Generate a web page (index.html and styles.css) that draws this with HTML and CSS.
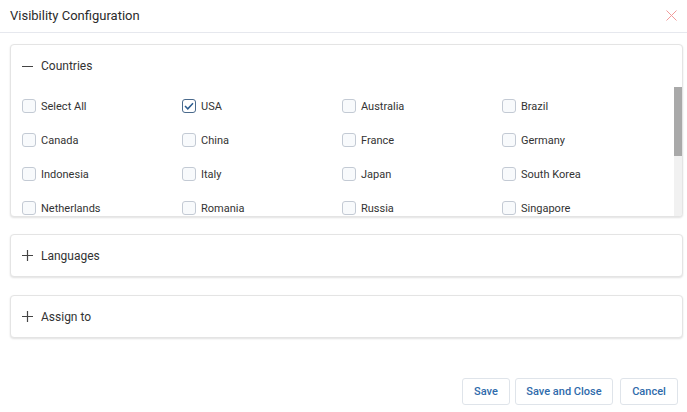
FILE: index.html
```html
<!DOCTYPE html>
<html>
<head>
<meta charset="utf-8">
<link rel="stylesheet" href="styles.css">
</head>
<body>
<div class="dialog">
  <div class="dlg-head">
    <span class="dlg-title">Visibility Configuration</span>
    <svg class="close" width="11" height="11" viewBox="0 0 11 11"><path d="M0.5 0.5L10.5 10.5M10.5 0.5L0.5 10.5" stroke="#f19a9a" stroke-width="1"/></svg>
  </div>
  <div class="dlg-body">
    <div class="panel panel-open">
      <div class="panel-head">
        <svg class="toggle" width="11" height="11" viewBox="0 0 11 11"><path d="M0 5.5H11" stroke="#444" stroke-width="1.2"/></svg>
        <span>Countries</span>
      </div>
      <div class="scroll-wrap">
        <div class="scroll">
          <div class="grid">
            <label class="item"><span class="cb"></span>Select All</label>
            <label class="item"><span class="cb checked"><svg width="10" height="8" viewBox="0 0 10 8"><path d="M1 4L3.8 6.8L9 1.2" fill="none" stroke="#2d5d8f" stroke-width="1.5"/></svg></span>USA</label>
            <label class="item"><span class="cb"></span>Australia</label>
            <label class="item"><span class="cb"></span>Brazil</label>
            <label class="item"><span class="cb"></span>Canada</label>
            <label class="item"><span class="cb"></span>China</label>
            <label class="item"><span class="cb"></span>France</label>
            <label class="item"><span class="cb"></span>Germany</label>
            <label class="item"><span class="cb"></span>Indonesia</label>
            <label class="item"><span class="cb"></span>Italy</label>
            <label class="item"><span class="cb"></span>Japan</label>
            <label class="item"><span class="cb"></span>South Korea</label>
            <label class="item"><span class="cb"></span>Netherlands</label>
            <label class="item"><span class="cb"></span>Romania</label>
            <label class="item"><span class="cb"></span>Russia</label>
            <label class="item"><span class="cb"></span>Singapore</label>
            <label class="item"><span class="cb"></span>Spain</label>
            <label class="item"><span class="cb"></span>Sweden</label>
            <label class="item"><span class="cb"></span>Switzerland</label>
            <label class="item"><span class="cb"></span>Taiwan</label>
            <label class="item"><span class="cb"></span>Thailand</label>
            <label class="item"><span class="cb"></span>Turkey</label>
            <label class="item"><span class="cb"></span>Ukraine</label>
            <label class="item"><span class="cb"></span>United Kingdom</label>
            <label class="item"><span class="cb"></span>Vietnam</label>
            <label class="item"><span class="cb"></span>Mexico</label>
            <label class="item"><span class="cb"></span>Argentina</label>
            <label class="item"><span class="cb"></span>India</label>
          </div>
        </div>
        <div class="sbar"><div class="sthumb"></div></div>
      </div>
    </div>
    <div class="panel">
      <div class="panel-head">
        <svg class="toggle" width="11" height="11" viewBox="0 0 11 11"><path d="M0 5.5H11M5.5 0V11" stroke="#444" stroke-width="1.2"/></svg>
        <span>Languages</span>
      </div>
    </div>
    <div class="panel">
      <div class="panel-head">
        <svg class="toggle" width="11" height="11" viewBox="0 0 11 11"><path d="M0 5.5H11M5.5 0V11" stroke="#444" stroke-width="1.2"/></svg>
        <span>Assign to</span>
      </div>
    </div>
  </div>
  <div class="dlg-foot">
    <button class="btn b-save">Save</button>
    <button class="btn b-sc">Save and Close</button>
    <button class="btn b-cancel">Cancel</button>
  </div>
</div>
</body>
</html>
```
FILE: styles.css
```css
* { box-sizing: border-box; }
html, body { margin: 0; padding: 0; background: #fff; }
body { font-family: Roboto, "Noto Sans", sans-serif; color: #333; width: 687px; height: 412px; overflow: hidden; }
.dialog { display: flex; flex-direction: column; height: 412px; }
.dlg-head { height: 33px; display: flex; align-items: center; justify-content: space-between; padding: 0 10px 2px 10px; border-bottom: 1px solid #e6e8ee; }
.dlg-title { font-size: 13px; color: #2b2b2b; }
.dlg-body { padding: 11px 4px 0 10px; display: flex; flex-direction: column; gap: 17px; }
.panel { border: 1px solid #e4e4e4; border-radius: 4px; box-shadow: 0 1px 2px rgba(0,0,0,0.12); background: #fff; overflow: hidden; }
.panel + .panel + .panel { margin-top: 1px; }
.panel-head { height: 41px; display: flex; align-items: center; padding-left: 11px; gap: 8px; font-size: 12px; color: #333; }
.panel-open .panel-head { height: 42px; }
.scroll-wrap { position: relative; height: 129px; }
.scroll { height: 129px; overflow-y: auto; scrollbar-width: none; }
.scroll::-webkit-scrollbar { display: none; }
.sbar { position: absolute; top: 0; right: 0; bottom: 0; width: 8px; background: #f1f1f1; }
.sthumb { height: 69px; background: #a9a9a9; }
.grid { display: grid; grid-template-columns: repeat(4, 160px); padding: 2px 0 0 11px; }
.item { height: 34px; display: flex; align-items: center; gap: 5px; font-size: 11px; color: #333; }
.cb { width: 14px; height: 14px; border: 1px solid #c3cad4; border-radius: 3px; background: #f8fafc; display: flex; align-items: center; justify-content: center; }
.cb.checked { border-color: #4a6a8c; background: #fff; }
.dlg-foot { margin-top: auto; display: flex; justify-content: flex-end; padding: 0 9px 7px 0; }
.btn { height: 27px; font-family: Roboto, "Noto Sans", sans-serif; font-size: 11px; font-weight: 500; color: #2f6bab; background: #fff; border: 1px solid #dfe4ea; border-radius: 3px; padding: 0; }
.b-save { width: 48px; }
.b-sc { width: 98px; margin-left: 5px; }
.b-cancel { width: 58px; margin-left: 7px; }
```
